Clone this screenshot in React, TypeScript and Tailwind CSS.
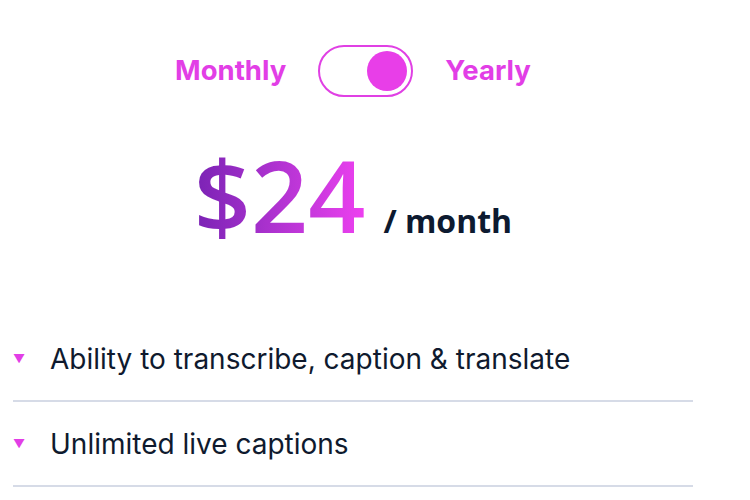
import React from 'react';

const features = ['Ability to transcribe, caption & translate', 'Unlimited live captions'];

function Toggle() {
  return (
    <div className="flex h-[52px] w-[95px] items-center justify-end rounded-full border-2 border-[#e040e4] bg-white px-[4px]">
      <div className="h-[40px] w-[40px] rounded-full bg-[#e83ee8]" />
    </div>
  );
}

export default function App() {
  return (
    <div className="h-[500px] w-[750px] overflow-hidden bg-white" style={{ fontFamily: 'Inter, "Liberation Sans", sans-serif' }}>
      <div className="flex w-[706px] flex-col">
        <div className="mt-[45px] flex items-center justify-center gap-[32px]">
          <span className="text-[27.5px] font-bold text-[#e23ee6]">Monthly</span>
          <Toggle />
          <span className="text-[27.5px] font-bold text-[#e23ee6]">Yearly</span>
        </div>

        <div className="mt-[37px] flex items-baseline justify-center gap-[18px]" style={{ fontFamily: '"Open Sans", "Noto Sans", sans-serif' }}>
          <span className="bg-gradient-to-r from-[#7a22b4] to-[#ee40f0] bg-clip-text text-[100px] font-semibold leading-[120px] text-transparent">
            $24
          </span>
          <span className="text-[32px] font-bold text-[#0d1a30]">/ month</span>
        </div>

        <ul className="mt-[63px] flex flex-col">
          {features.map((f) => (
            <li key={f} className="mx-[13px] flex h-[85px] flex-col justify-end border-b-2 border-[#d6dbe7]">
              <div className="mb-[24px] flex items-center">
                <span className="w-[37px] text-[12px] leading-none text-[#e23ee6]">▼</span>
                <span className="text-[28px] leading-[34px] text-[#0f1a2e]">{f}</span>
              </div>
            </li>
          ))}
        </ul>
      </div>
    </div>
  );
}
